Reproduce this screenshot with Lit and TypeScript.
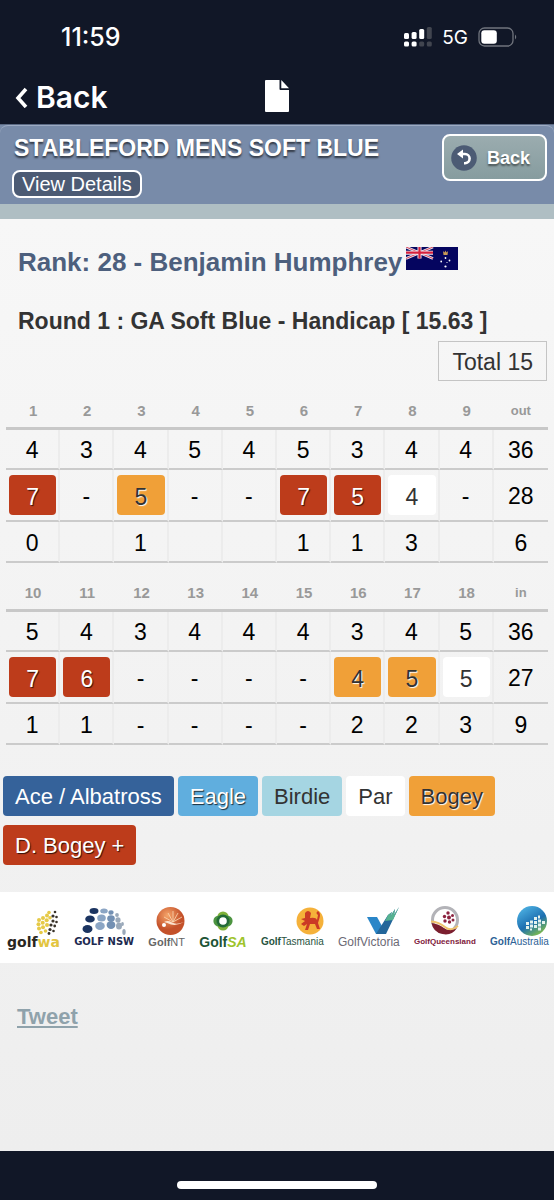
import { LitElement, html, css, svg, nothing } from "lit";
import { customElement, property } from "lit/decorators.js";
import { classMap } from "lit/directives/class-map.js";

type Kind = "ace" | "eagle" | "birdie" | "par" | "bogey" | "double" | "";
interface Score { value: string; kind: Kind }
interface Nine {
  label: string;
  total: string;
  holes: number[];
  par: string[];
  scores: Score[];
  points: string[];
}

const s = (value: string, kind: Kind = ""): Score => ({ value, kind });

const NINES: Nine[] = [
  {
    label: "Front nine",
    total: "out",
    holes: [1, 2, 3, 4, 5, 6, 7, 8, 9],
    par: ["4", "3", "4", "5", "4", "5", "3", "4", "4", "36"],
    scores: [s("7", "double"), s("-"), s("5", "bogey"), s("-"), s("-"), s("7", "double"), s("5", "double"), s("4", "par"), s("-"), s("28")],
    points: ["0", "", "1", "", "", "1", "1", "3", "", "6"],
  },
  {
    label: "Back nine",
    total: "in",
    holes: [10, 11, 12, 13, 14, 15, 16, 17, 18],
    par: ["5", "4", "3", "4", "4", "4", "3", "4", "5", "36"],
    scores: [s("7", "double"), s("6", "double"), s("-"), s("-"), s("-"), s("-"), s("4", "bogey"), s("5", "bogey"), s("5", "par"), s("27")],
    points: ["1", "1", "-", "-", "-", "-", "2", "2", "3", "9"],
  },
];

const LEGEND: [string, Kind][] = [
  ["Ace / Albatross", "ace"],
  ["Eagle", "eagle"],
  ["Birdie", "birdie"],
  ["Par", "par"],
  ["Bogey", "bogey"],
  ["D. Bogey +", "double"],
];

const chipStyles = css`
  .chip {
    box-sizing: border-box;
    height: 40px;
    border-radius: 4px;
    color: #fff;
    text-shadow: 1px 1px 1px rgba(0, 0, 0, 0.75);
  }
  .ace { background: #35629a; text-shadow: none; }
  .eagle { background: #60aede; }
  .birdie { background: #a5d5e2; color: #333; text-shadow: none; }
  .par { background: #fff; color: #333; text-shadow: none; }
  .bogey { background: #f0a038; color: #333; text-shadow: 1px 1px 1px #fff; }
  .double { background: #bd3c1b; }
`;

@customElement("status-bar")
export class StatusBar extends LitElement {
  static styles = css`
    :host {
      display: flex;
      align-items: center;
      justify-content: space-between;
      height: 74px;
      padding: 0 37px 0 61px;
      color: #fff;
      font-family: Inter, "Liberation Sans", sans-serif;
    }
    .time { font-size: 25px; font-weight: 500; }
    .right { display: flex; align-items: center; gap: 10px; }
    .net { font-size: 19px; }
    svg { display: block; }
  `;
  render() {
    return html`
      <span class="time">11:59</span>
      <div class="right">
        <svg width="28" height="20" viewBox="0 0 28 20" aria-hidden="true">
          <g fill="#fff">
            <rect x="0" y="6" width="5" height="6" rx="1.5" />
            <rect x="7.600" y="5" width="5" height="7" rx="1.5" />
            <rect x="15.200" y="2" width="5" height="10" rx="1.5" />
            <rect x="0" y="14.500" width="5" height="5" rx="1.5" />
            <rect x="7.600" y="14.500" width="5" height="5" rx="1.5" />
          </g>
          <g fill="#41454f">
            <rect x="22.800" y="0" width="5" height="12" rx="1.5" />
            <rect x="15.200" y="14.500" width="5" height="5" rx="1.5" />
            <rect x="22.800" y="14.500" width="5" height="5" rx="1.5" />
          </g>
        </svg>
        <span class="net">5G</span>
        <svg width="39" height="20" viewBox="0 0 39 20" aria-hidden="true">
          <rect x="1" y="1" width="34" height="18" rx="5.500" fill="none" stroke="#70747d" stroke-width="1.300" />
          <rect x="3.300" y="3.300" width="15.500" height="13.400" rx="3" fill="#fff" />
          <path d="M37 7.500 Q39.500 10 37 12.500 Z" fill="#70747d" />
        </svg>
      </div>
    `;
  }
}

@customElement("nav-bar")
export class NavBar extends LitElement {
  static styles = css`
    :host {
      display: grid;
      grid-template-columns: 1fr auto 1fr;
      align-items: center;
      height: 50px;
      padding: 0 14px;
      color: #fff;
      font-family: Inter, "Liberation Sans", sans-serif;
    }
    button {
      display: flex;
      align-items: center;
      gap: 8px;
      justify-self: start;
      margin: 0;
      padding: 0 0 4px;
      border: 0;
      background: none;
      color: inherit;
      font: 600 30px/36px Inter, "Liberation Sans", sans-serif;
    }
    button.file { padding: 0 0 6px; }
    svg { display: block; }
  `;
  render() {
    return html`
      <button type="button">
        <svg width="14" height="22" viewBox="0 0 14 22" aria-hidden="true">
          <path d="M12 3 L4 12 L12 21" fill="none" stroke="#fff" stroke-width="3.600" />
        </svg>
        Back
      </button>
      <button type="button" class="file" aria-label="Document">
        <svg width="25" height="32" viewBox="0 0 25 32" aria-hidden="true">
          <path d="M1 0 H14.500 V9 Q14.500 10 15.500 10 H24 V31 Q24 32 23 32 H1 Q0 32 0 31 V1 Q0 0 1 0 Z M16.300 0 L24 8.200 H16.300 Z" fill="#fff" />
        </svg>
      </button>
    `;
  }
}

@customElement("event-header")
export class EventHeader extends LitElement {
  static styles = css`
    :host {
      display: block;
      background: #788ba9;
      border-top: 1px solid #5b6a84;
      border-bottom: 15px solid #afbec3;
    }
    .panel {
      display: flex;
      align-items: flex-start;
      justify-content: space-between;
      padding: 8px 7px 6px 12px;
      border-top: 1px solid #9dabc3;
      border-radius: 8px 8px 0 0;
    }
    .info { display: flex; flex-direction: column; align-items: flex-start; gap: 8px; }
    h1 {
      margin: 0;
      padding: 0 2px;
      font-size: 23px;
      line-height: 28px;
      color: #fff;
      text-shadow: 0 2px 2px rgba(0, 0, 0, 0.6);
    }
    button { margin: 0; border: 2px solid #fff; border-radius: 8px; color: #fff; }
    .details { padding: 0 8px; background: #4c5b74; font: 20px/24px "Liberation Sans", sans-serif; }
    .back {
      display: flex;
      align-items: center;
      gap: 10px;
      height: 47px;
      padding: 0 15px 0 7px;
      background: linear-gradient(#9bacaf, #869c9f);
      font: bold 18px/24px "Liberation Sans", sans-serif;
      text-shadow: 0 2px 2px rgba(0, 0, 0, 0.5);
    }
    svg { display: block; }
  `;
  render() {
    return html`
      <div class="panel">
        <div class="info">
          <h1>STABLEFORD MENS SOFT BLUE</h1>
          <button type="button" class="details">View Details</button>
        </div>
        <button type="button" class="back">
          <svg width="26" height="26" viewBox="0 0 26 26" aria-hidden="true">
            <circle cx="13" cy="13" r="12.800" fill="#4c5b74" />
            <path d="M10 9 H14 A4.600 4.600 0 0 1 14 18.200 H13" fill="none" stroke="#fff" stroke-width="2.600" />
            <path d="M6 9 L12 4.500 L12 13.500 Z" fill="#fff" />
          </svg>
          Back
        </button>
      </div>
    `;
  }
}

@customElement("score-table")
export class ScoreTable extends LitElement {
  @property({ attribute: false }) nine!: Nine;

  static styles = [
    chipStyles,
    css`
      :host { display: block; }
      table { width: 100%; table-layout: fixed; border-collapse: separate; border-spacing: 0; }
      th, td { box-sizing: border-box; padding: 0; text-align: center; }
      th {
        height: 36px;
        border-bottom: 3px solid #c8c8c8;
        color: #999;
        font-size: 15px;
        line-height: 20px;
      }
      th:last-child { font-size: 13px; }
      td {
        height: 40px;
        padding-top: 2px;
        border-bottom: 2px solid #cbcbcb;
        border-right: 2px solid #ececec;
        font-size: 23px;
        line-height: 28px;
        color: #000;
      }
      td:last-child { border-right: 0; }
      .scores td { height: 52px; }
      .scores .marked { padding-top: 0; }
      .points td { height: 41px; }
      .chip { display: block; margin: 0 2px 0 3px; line-height: 44px; }
    `,
  ];

  render() {
    const n = this.nine;
    return html`
      <table aria-label=${n.label}>
        <thead>
          <tr>${n.holes.map((h) => html`<th scope="col">${h}</th>`)}<th scope="col">${n.total}</th></tr>
        </thead>
        <tbody>
          <tr>${n.par.map((p) => html`<td>${p}</td>`)}</tr>
          <tr class="scores">
            ${n.scores.map((x) =>
              x.kind
                ? html`<td class="marked"><span class=${classMap({ chip: true, [x.kind]: true })}>${x.value}</span></td>`
                : html`<td>${x.value}</td>`,
            )}
          </tr>
          <tr class="points">${n.points.map((p) => html`<td>${p || nothing}</td>`)}</tr>
        </tbody>
      </table>
    `;
  }
}

const dots = (list: number[][], fill: string) =>
  list.map(([x, y, rx, ry]) => svg`<ellipse cx=${x} cy=${y} rx=${rx} ry=${ry ?? rx} fill=${fill} />`);

@customElement("sponsor-strip")
export class SponsorStrip extends LitElement {
  static styles = css`
    :host {
      display: flex;
      justify-content: space-between;
      align-items: flex-start;
      padding: 14px 5px 15px 7px;
      background: #fff;
      font-family: "Liberation Sans", sans-serif;
    }
    a {
      display: flex;
      flex-direction: column;
      align-items: center;
      color: #333;
      text-decoration: none;
      line-height: 12px;
      white-space: nowrap;
    }
    .end { align-items: flex-end; }
    svg { display: block; height: 30px; }
    b { font-weight: 700; }
    .wa, .nsw { font-family: "DejaVu Sans", sans-serif; font-weight: 700; }
    .wa { font-size: 14px; color: #2a2722; }
    .wa b { color: #e3c53f; }
    .nsw { font-size: 10px; color: #1d2a50; }
    .nt { font-size: 11px; color: #666; }
    .sa { font-size: 14px; font-weight: 700; color: #1d5435; }
    .sa i { color: #9ec42c; }
    .tas { font-size: 10px; color: #28543f; }
    .vic { font-size: 12px; color: #6c6a75; }
    .qld { font-size: 8px; font-weight: 700; color: #80203b; }
    .aus { font-size: 10px; color: #2d6296; }
  `;
  render() {
    return html`
      <a href="#wa" class="wa end">
        <svg width="24" viewBox="0 0 24 30" aria-hidden="true">
          ${dots([[3, 14, 2], [7, 12, 2], [11, 9.500, 2], [2.500, 18.300, 2], [6.700, 16.700, 2], [10.700, 14.200, 2], [14, 11.700, 1.800], [3, 22.500, 2], [7, 21.200, 2], [11, 19, 2], [13, 6.500, 1.800], [5, 26.500, 1.800], [9.500, 25, 1.800]], "#e6ca48")}
          ${dots([[19, 6, 1.300], [17, 10, 1.600], [20.500, 11, 1.300], [17, 15, 1.600], [20.500, 16, 1.300], [15, 19, 1.600], [18.700, 20, 1.400], [14, 23.500, 1.600], [17.500, 25, 1.300], [13, 27.500, 1.400]], "#39332a")}
        </svg>
        <span>golf<b>wa</b></span>
      </a>
      <a href="#nsw" class="nsw">
        <svg width="44" viewBox="0 0 44 30" aria-hidden="true">
          ${dots([[12, 5, 4.500, 3], [8, 13, 4.800, 3.600], [5.500, 23, 5, 4]], "#1b3461")}
          ${dots([[22, 5, 3.800, 2.500], [19.500, 12, 4.300, 3.500], [18, 20, 4.800, 4]], "#8ba5c4")}
          ${dots([[29, 6.500, 2.600, 2.300], [29, 12.500, 3.800, 3.300], [29, 19, 4.400, 4]], "#7390b3")}
          ${dots([[35, 9, 1.900, 2], [36, 14, 2.600, 2.800], [37, 20, 3, 3.600], [42, 26, 1.700, 3], [40.500, 18, 1.400, 2]], "#9aa9ba")}
        </svg>
        <span>GOLF NSW</span>
      </a>
      <a href="#nt" class="nt end">
        <svg width="29" viewBox="0 0 29 30" aria-hidden="true">
          <defs><radialGradient id="nt" cx=".4" cy=".3"><stop offset="0" stop-color="#f6a56a" /><stop offset="1" stop-color="#c4512a" /></radialGradient></defs>
          <circle cx="14.500" cy="15" r="14" fill="url(#nt)" />
          <path d="M17 16 L8 11 M17 16 L12 7 M17 16 L17 5 M17 16 L22 7 M17 16 L26 11" stroke="#fbd9b5" stroke-width=".8" />
          <path d="M8 16 Q12 14 16 16.500 T28 16 Q21 20 15 18.500 Q11 16.500 8 16 Z" fill="#fbe3cf" />
          <circle cx="8" cy="19" r="2" fill="#fff" />
        </svg>
        <span><b>Golf</b>NT</span>
      </a>
      <a href="#sa" class="sa">
        <svg width="20" viewBox="0 0 20 30" aria-hidden="true">
          <g fill="#7fb23a"><circle cx="10" cy="11" r="5.600" /><circle cx="10" cy="19" r="5.600" /></g>
          <g fill="#4c9440"><circle cx="6" cy="15" r="5.600" /><circle cx="14" cy="15" r="5.600" /></g>
          <circle cx="10" cy="15" r="6.500" fill="#236b38" />
          <circle cx="10" cy="15" r="3.800" fill="#fff" />
        </svg>
        <span>Golf<i>SA</i></span>
      </a>
      <a href="#tas" class="tas end">
        <svg width="28" viewBox="0 0 28 30" aria-hidden="true">
          <circle cx="14" cy="15" r="13.500" fill="#f5b13a" />
          <path d="M9 7 Q12 3 15 7 L14 12 Q20 11 21 14 L22 9 Q19 7 22 5 Q25 7 23.500 12 L22 17 L24 23 H21 L19 18 L14 18 L12 24 H9 L11 18 L8 20 L5 18 L9 15 L5 13 L9 12 Z" fill="#cb3a25" />
        </svg>
        <span><b>Golf</b>Tasmania</span>
      </a>
      <a href="#vic" class="vic end">
        <svg width="34" viewBox="0 0 34 30" aria-hidden="true">
          <path d="M1 11 H11 L16 20 L15 28 H10 Z" fill="#2a86c8" />
          <path d="M10 28 L22 9 L26 6 L24 11 L29 3 L28 9 L33 1 L20 28 Z" fill="#23669a" />
          <path d="M22 9 L26 6 L24 11 L29 3 L28 9 L33 1 L27 14 L19 15 Z" fill="#55b290" />
        </svg>
        <span>GolfVictoria</span>
      </a>
      <a href="#qld" class="qld">
        <svg width="30" viewBox="0 0 30 30" aria-hidden="true">
          <circle cx="15" cy="14" r="12.500" fill="#fff" stroke="#b3b3b8" stroke-width="3" />
          <path d="M1.500 17 Q9 18 14 22 T27 22 A14 14 0 0 1 1.500 17 Z" fill="#7b1f2f" />
          <path d="M1 15.500 Q9 16 15 21 T28 20" fill="none" stroke="#efc26a" stroke-width="1.800" />
          ${dots([[18, 7, 1.700], [14.500, 10.500, 1.700], [19, 11.500, 2], [22.500, 9.500, 1.500], [15, 15, 1.700], [19.500, 16, 1.700], [23, 14, 1.500]], "#8c2340")}
        </svg>
        <span>GolfQueensland</span>
      </a>
      <a href="#aus" class="aus end">
        <svg width="34" viewBox="0 0 34 30" aria-hidden="true">
          <defs><linearGradient id="au" x1=".2" y1="0" x2=".8" y2="1"><stop offset="0" stop-color="#4eb3e4" /><stop offset=".55" stop-color="#1d6fb0" /><stop offset="1" stop-color="#8cc63f" /></linearGradient></defs>
          <circle cx="17" cy="15" r="15" fill="url(#au)" />
          <path d="M11 16 h3 v3 h-3z M11 20 h3 v3 h-3z M15 14.500 h3 v3 h-3z M15 18.500 h3 v3 h-3z M19 11 h3 v3 h-3z M19 15 h3 v3 h-3z M19 19 h3 v3 h-3z M23 9.500 h2 v3 h-2z M23 13.500 h3 v3 h-3z M23 17.500 h3 v3 h-3z M27 15 h3 v3 h-3z M15 22.500 h2 v2 h-2z M23 21.500 h3 v3 h-3z" fill="#e4f2ee" />
        </svg>
        <span><b>Golf</b>Australia</span>
      </a>
    `;
  }
}

@customElement("app-root")
export class AppRoot extends LitElement {
  static styles = [
    chipStyles,
    css`
      :host {
        display: flex;
        flex-direction: column;
        min-height: 100vh;
        background: #111727;
        font-family: "Liberation Sans", sans-serif;
      }
      main { flex: 1; background: linear-gradient(#f7f7f7, #eee); }
      h2, h3 { margin: 0; padding: 0 18px; }
      h2 {
        display: flex;
        align-items: flex-start;
        gap: 4px;
        padding-top: 28px;
        font-size: 26px;
        line-height: 30px;
        color: #4d5f7d;
      }
      h3 { padding-top: 29px; font-size: 23px; line-height: 30px; color: #333; }
      .total-row { display: flex; justify-content: flex-end; padding: 5px 7px 13px; }
      .total {
        box-sizing: border-box;
        height: 40px;
        padding: 0 13px;
        border: 1px solid #c4c4c4;
        font-size: 23px;
        line-height: 40px;
        color: #333;
      }
      .cards { display: flex; flex-direction: column; gap: 13px; padding: 0 6px; }
      .legend {
        display: flex;
        flex-wrap: wrap;
        gap: 9px 4px;
        margin: 0;
        padding: 31px 3px 27px;
        list-style: none;
        font-size: 22px;
      }
      .legend .chip { padding: 0 12px; line-height: 42px; }
      .share { padding: 41px 17px; }
      .share a { font-size: 22px; line-height: 26px; font-weight: 700; color: #8fa2ab; }
      .home { display: flex; justify-content: center; padding: 30px 0 11px; }
      .handle { width: 36%; height: 8px; border-radius: 4px; background: #fff; }
    `,
  ];
  render() {
    return html`
      <status-bar></status-bar>
      <nav-bar></nav-bar>
      <event-header></event-header>
      <main>
        <h2>
          Rank: 28 - Benjamin Humphrey
          <svg width="52" height="23" viewBox="0 0 52 23" role="img" aria-label="Flag of Victoria">
            <rect width="52" height="23" fill="#05055f" />
            <path d="M0 0 L27 11.500 M27 0 L0 11.500" stroke="#e8e6f0" stroke-width="2.600" />
            <path d="M0 0 L27 11.500 M27 0 L0 11.500" stroke="#d8455a" stroke-width="1" />
            <path d="M13.500 0 V11.500 M0 5.700 H27" stroke="#f2eef4" stroke-width="4" />
            <path d="M13.500 0 V11.500 M0 5.700 H27" stroke="#d6203c" stroke-width="2.200" />
            <path d="M37 4 L38.500 5.500 L39.500 3.500 L40.500 5.500 L42 4 L41.500 8 H37.500 Z" fill="#c99a55" />
            <g fill="#fff"><circle cx="39.500" cy="11" r=".9" /><circle cx="35.200" cy="14.500" r=".9" /><circle cx="43.500" cy="13.500" r=".9" /><circle cx="41" cy="15.500" r=".6" /><circle cx="39.500" cy="19.500" r="1.100" /></g>
          </svg>
        </h2>
        <h3>Round 1 : GA Soft Blue - Handicap [ 15.63 ]</h3>
        <div class="total-row"><div class="total">Total 15</div></div>
        <div class="cards">${NINES.map((n) => html`<score-table .nine=${n}></score-table>`)}</div>
        <ul class="legend">
          ${LEGEND.map(([label, kind]) => html`<li class=${classMap({ chip: true, [kind]: true })}>${label}</li>`)}
        </ul>
        <sponsor-strip></sponsor-strip>
        <div class="share"><a href="#tweet">Tweet</a></div>
      </main>
      <div class="home"><div class="handle"></div></div>
    `;
  }
}
